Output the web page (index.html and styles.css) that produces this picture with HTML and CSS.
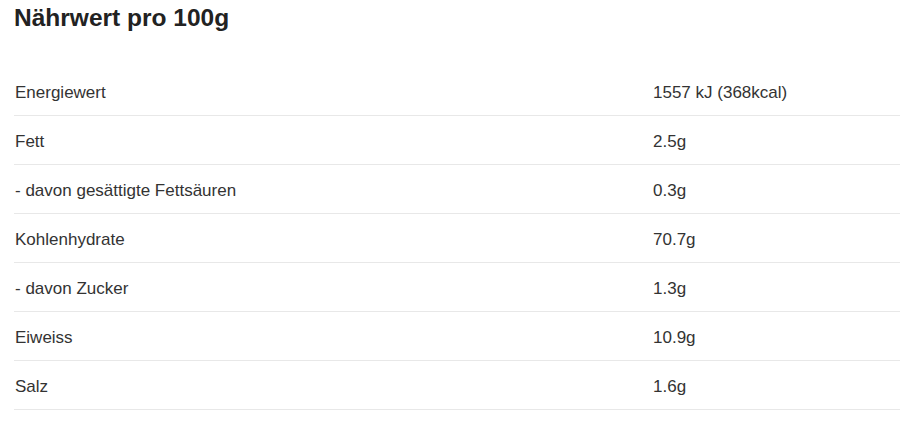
FILE: index.html
```html
<!DOCTYPE html>
<html lang="de">
<head>
<meta charset="utf-8">
<link rel="stylesheet" href="styles.css">
</head>
<body>
<section class="nutrition">
  <h2 class="nutrition-title">Nährwert pro 100g</h2>
  <table class="nutrition-table">
    <tbody>
      <tr><td class="label">Energiewert</td><td class="value">1557 kJ (368kcal)</td></tr>
      <tr><td class="label">Fett</td><td class="value">2.5g</td></tr>
      <tr><td class="label">- davon gesättigte Fettsäuren</td><td class="value">0.3g</td></tr>
      <tr><td class="label">Kohlenhydrate</td><td class="value">70.7g</td></tr>
      <tr><td class="label">- davon Zucker</td><td class="value">1.3g</td></tr>
      <tr><td class="label">Eiweiss</td><td class="value">10.9g</td></tr>
      <tr><td class="label">Salz</td><td class="value">1.6g</td></tr>
    </tbody>
  </table>
</section>
</body>
</html>
```
FILE: styles.css
```css
html, body {
  margin: 0;
  padding: 0;
  background: #fff;
}
body {
  font-family: "Liberation Sans", Arial, sans-serif;
  color: #333;
}
.nutrition {
  padding: 0 0 0 14px;
}
.nutrition-title {
  margin: 0;
  padding-top: 4px;
  font-size: 24.5px;
  line-height: 28px;
  font-weight: bold;
  color: #222;
}
.nutrition-table {
  margin-top: 35px;
  width: 100%;
  border-collapse: collapse;
  font-size: 17px;
}
.nutrition-table td {
  padding: 15px 1px 11px;
  line-height: 22px;
  border-bottom: 1px solid #e8e8e8;
  vertical-align: top;
}
.nutrition-table .label {
  width: 636px;
}
```
